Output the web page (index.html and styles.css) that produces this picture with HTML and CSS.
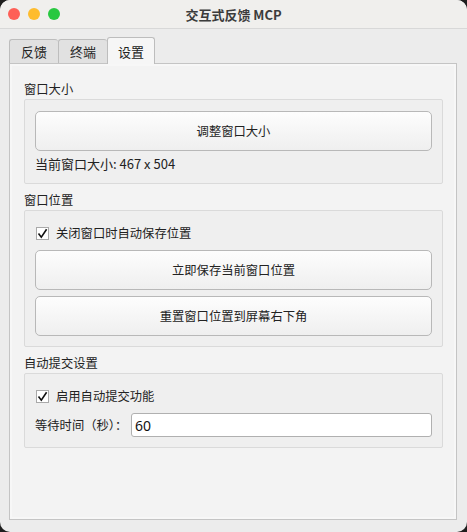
FILE: index.html
```html
<!DOCTYPE html>
<html lang="zh-CN">
  <head>
    <meta charset="UTF-8">
    <title>交互式反馈 MCP</title>
    <link rel="stylesheet" href="styles.css">
  </head>
  <body>
    <div class="window">
      <!-- Title bar -->
      <div class="titlebar">
        <div class="lights">
          <span class="light red"></span>
          <span class="light yellow"></span>
          <span class="light green"></span>
        </div>
        <div class="title">交互式反馈 MCP</div>
      </div>
      <div class="content">
        <!-- Tabs -->
        <div class="tabs">
          <div class="tab">反馈</div>
          <div class="tab">终端</div>
          <div class="tab active">设置</div>
        </div>
        <div class="pane">
          <!-- Window size -->
          <div class="section-label">窗口大小</div>
          <div class="group">
            <button class="btn">调整窗口大小</button>
            <div class="info">当前窗口大小: 467 x 504</div>
          </div>
          <!-- Window position -->
          <div class="section-label">窗口位置</div>
          <div class="group">
            <label class="check">
              <span class="box"><svg width="11" height="11" viewBox="0 0 11 11"><path d="M1.5 5.5 L4.3 9.2 L9.6 1.2" fill="none" stroke="#111" stroke-width="1.6"/></svg></span>
              关闭窗口时自动保存位置
            </label>
            <button class="btn">立即保存当前窗口位置</button>
            <button class="btn">重置窗口位置到屏幕右下角</button>
          </div>
          <!-- Auto submit -->
          <div class="section-label">自动提交设置</div>
          <div class="group">
            <label class="check">
              <span class="box"><svg width="11" height="11" viewBox="0 0 11 11"><path d="M1.5 5.5 L4.3 9.2 L9.6 1.2" fill="none" stroke="#111" stroke-width="1.6"/></svg></span>
              启用自动提交功能
            </label>
            <div class="field">
              <span class="field-label">等待时间（秒）：</span>
              <input class="input" type="text" value="60">
            </div>
          </div>
        </div>
      </div>
    </div>
  </body>
</html>
```
FILE: styles.css
```css
/* General */
body {
  margin: 0;
  background: #1e1e1e;
  font-family: "Noto Sans CJK SC", "Noto Sans", sans-serif;
  font-size: 12.3px;
  color: #222;
}

.window {
  width: 467px;
  height: 532px;
  background: #ececec;
  border-radius: 10px;
  overflow: hidden;
  display: flex;
  flex-direction: column;
}

/* Title bar */
.titlebar {
  height: 28px;
  flex: none;
  background: #f0efed;
  border-bottom: 1px solid #d8d8d8;
  display: flex;
  align-items: center;
  position: relative;
}

.lights {
  display: flex;
  gap: 8px;
  padding-left: 8px;
}

.light {
  width: 12px;
  height: 12px;
  border-radius: 50%;
}

.red { background: #fe5f57; }
.yellow { background: #febc2e; }
.green { background: #28c840; }

.title {
  position: absolute;
  left: 0;
  right: 0;
  text-align: center;
  font-weight: bold;
  font-size: 13px;
  color: #3c3c3c;
}

/* Tabs */
.content {
  padding: 8px 10px 0 9px;
}

.tabs {
  display: flex;
  align-items: flex-end;
  height: 26px;
}

.tab {
  width: 48px;
  height: 23px;
  display: flex;
  align-items: center;
  justify-content: center;
  background: #e1e1e1;
  border: 1px solid #bdbdbd;
  border-bottom: none;
  border-right: none;
  border-radius: 3px 3px 0 0;
  font-size: 13px;
  color: #222;
}

.tab.active {
  width: 46px;
  height: 26px;
  background: #f6f6f6;
  border-right: 1px solid #bdbdbd;
  margin-bottom: -1px;
  position: relative;
  z-index: 1;
}

.pane {
  height: 439px;
  background: #f3f3f3;
  border: 1px solid #c4c4c4;
  box-shadow: inset 0 0 0 2px #f7f7f7;
  padding: 16px 13px 0 14px;
}

/* Groups */
.section-label {
  line-height: 18px;
  margin-bottom: 1px;
}

.group {
  border: 1px solid #dadada;
  border-radius: 2px;
  background: #efefef;
  padding: 11px 10px 10px 10px;
  display: flex;
  flex-direction: column;
  gap: 6px;
  margin-bottom: 7px;
}

.btn {
  height: 40px;
  margin: 0;
  border: 1px solid #b8b8b8;
  border-radius: 5px;
  background: linear-gradient(to bottom, #fdfdfd, #efefef);
  font-family: inherit;
  font-size: 12.3px;
  color: #222;
}

.info {
  line-height: 18px;
  margin-top: -2px;
  font-size: 13px;
}

.check {
  display: flex;
  align-items: center;
  gap: 7px;
  line-height: 18px;
  margin-top: 2px;
  margin-bottom: 2px;
}

.box {
  width: 11px;
  height: 11px;
  border: 1px solid #a9a9a9;
  background: #fff;
  display: flex;
  margin-left: 1px;
}

.field {
  display: flex;
  align-items: center;
}

.field-label {
  width: 96px;
  white-space: nowrap;
}

.input {
  flex: 1;
  height: 24px;
  box-sizing: border-box;
  border: 1px solid #b0b0b0;
  border-radius: 3px;
  background: #fff;
  padding: 0 3px;
  font-family: "Noto Sans", sans-serif;
  font-size: 14px;
  color: #111;
}
```
